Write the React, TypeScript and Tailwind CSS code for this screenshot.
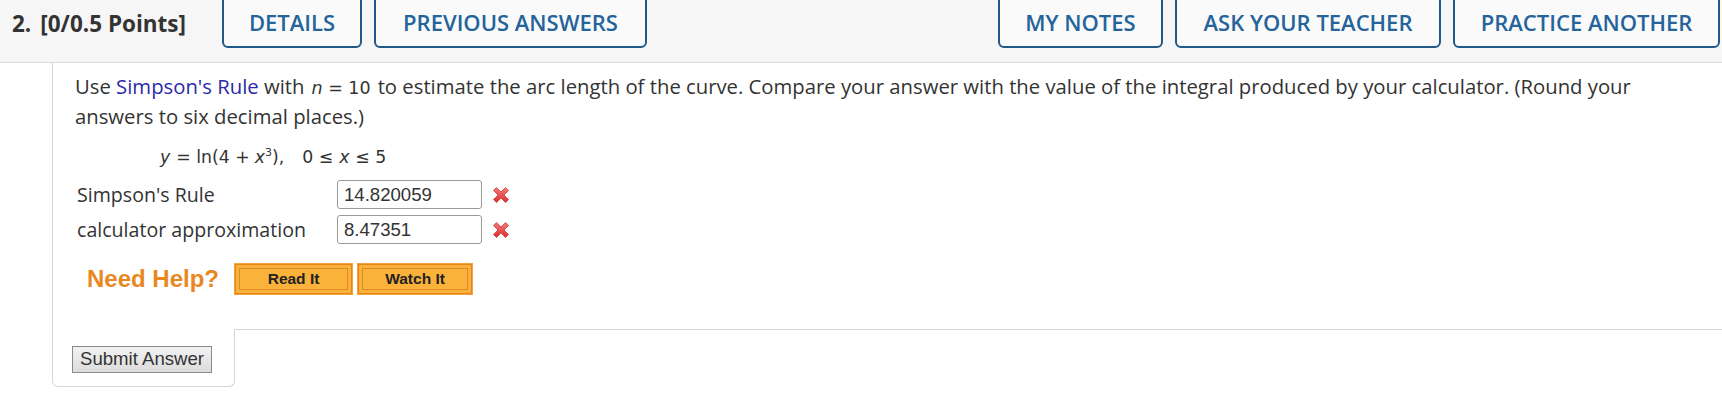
import React from "react";

const tabBtn =
  "h-[52px] -mt-[4px] flex items-center justify-center border-2 border-[#1f5a8a] rounded-b-[6px] bg-[#fafafa] text-[#24649b] text-[22px] font-semibold uppercase";

const CrossIcon = () => (
  <svg width="20" height="20" viewBox="0 0 20 20">
    <defs>
      <linearGradient id="xg" x1="0" y1="0" x2="0" y2="1">
        <stop offset="0" stopColor="#f47a7a" />
        <stop offset="1" stopColor="#d92f2f" />
      </linearGradient>
    </defs>
    <path
      d="M2.5 5.5 L5.5 2.5 L10 7 L14.5 2.5 L17.5 5.5 L13 10 L17.5 14.5 L14.5 17.5 L10 13 L5.5 17.5 L2.5 14.5 L7 10 Z"
      fill="url(#xg)"
      stroke="#d43a3a"
      strokeWidth="0.8"
      strokeLinejoin="round"
    />
  </svg>
);

const HelpButton = ({ label, w }: { label: string; w: string }) => (
  <button
    className={`${w} h-[30px] p-[3px] bg-[#fbb23a] border border-[#e2851a] shadow-[0_0_0_1px_#f3a23c]`}
  >
    <span className="flex h-full items-center justify-center border border-[#d98a2a] text-[15.5px] font-bold text-[#222] [font-family:'Liberation_Sans',Arial,sans-serif]">
      {label}
    </span>
  </button>
);

const AnswerRow = ({ label, value }: { label: string; value: string }) => (
  <div className="flex items-center h-[29px]">
    <span className="w-[260px] text-[19.6px] text-[#333]">{label}</span>
    <div className="w-[145px] h-[29px] border border-[#9a9a9a] rounded-[3px] px-[6px] flex items-center text-[18.6px] text-[#333] [font-family:'Liberation_Sans',Arial,sans-serif]">
      {value}
    </div>
    <span className="ml-[9px] flex items-center">
      <CrossIcon />
    </span>
  </div>
);

export default function App() {
  return (
    <div className="w-[1722px] h-[403px] bg-white overflow-hidden [font-family:'Open_Sans',sans-serif]">
      {/* header */}
      <div className="h-[63px] bg-[#f6f6f6] border-b border-[#dcdcdc] flex items-start overflow-hidden">
        <div className="h-[48px] flex items-center pl-[12px] text-[22.5px] font-bold text-[#333] w-[222px]">
          <span>2.</span>
          <span className="ml-[9px]">[0/0.5 Points]</span>
        </div>
        <div className="flex gap-[12px]">
          <button className={`${tabBtn} w-[140px]`}>Details</button>
          <button className={`${tabBtn} w-[273px]`}>Previous Answers</button>
        </div>
        <div className="flex gap-[12px] ml-auto mr-[2px]">
          <button className={`${tabBtn} w-[165px]`}>My Notes</button>
          <button className={`${tabBtn} w-[266px]`}>Ask Your Teacher</button>
          <button className={`${tabBtn} w-[267px]`}>Practice Another</button>
        </div>
      </div>

      {/* question body */}
      <div className="ml-[52px] border-l border-[#d6d6d6] pl-[22px] pt-[9px] pb-[32px] text-[#333]">
        <p className="text-[20.3px] leading-[28px] pr-[50px]">
          Use <span className="text-[#2a2aa8]">Simpson's Rule</span> with
          <span className="mx-[7px] [font-family:'DejaVu_Sans',sans-serif] text-[17.5px]">
            <i>n</i> = 10
          </span>
          to estimate the arc length of the curve. Compare your answer with the value of the integral produced by
          your calculator. (Round your answers to six decimal places.)
        </p>
        <div className="mt-[14px] ml-[85px] h-[28px] flex items-center text-[17.3px] [font-family:'DejaVu_Sans',sans-serif]">
          <i>y</i>
          <span className="ml-[6px]">= ln(4 + </span>
          <i className="ml-[5px]">x</i>
          <sup className="text-[11px]">3</sup>
          <span>),</span>
          <span className="ml-[18px]">0 ≤ </span>
          <i className="ml-[6px]">x</i>
          <span className="ml-[6px]">≤ 5</span>
        </div>
        <div className="mt-[8px] ml-[2px] flex flex-col gap-[6px]">
          <AnswerRow label="Simpson's Rule" value="14.820059" />
          <AnswerRow label="calculator approximation" value="8.47351" />
        </div>
        <div className="mt-[17px] ml-[12px] flex items-center">
          <span className="text-[24px] font-bold text-[#e8881f] [font-family:'Liberation_Sans',Arial,sans-serif] mr-[16px]">
            Need Help?
          </span>
          <div className="flex gap-[6px]">
            <HelpButton label="Read It" w="w-[117px]" />
            <HelpButton label="Watch It" w="w-[114px]" />
          </div>
        </div>
      </div>

      {/* submit row */}
      <div className="flex">
        <div className="ml-[52px] w-[183px] h-[58px] border-l border-r border-b border-[#d6d6d6] rounded-b-[6px] pl-[19px] pt-[17px]">
          <button className="h-[27px] px-[7px] border border-[#8a8a8a] bg-gradient-to-b from-[#f2f2f2] to-[#dcdcdc] text-[18.6px] text-[#333] leading-none [font-family:'Liberation_Sans',Arial,sans-serif]">
            Submit Answer
          </button>
        </div>
        <div className="flex-1 border-t border-[#d6d6d6]" />
      </div>
    </div>
  );
}
